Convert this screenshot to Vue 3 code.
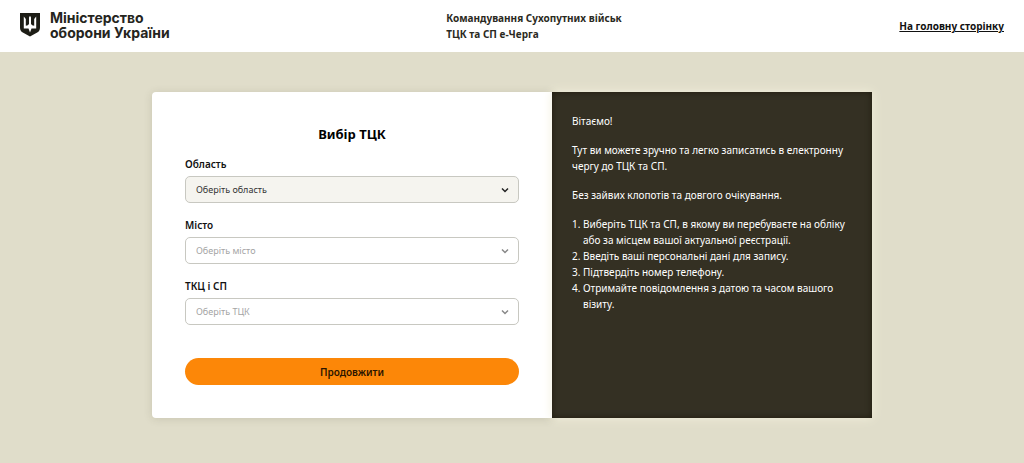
<template>
  <div class="page">
    <header class="header">
      <div class="logo">
        <svg class="logo-icon" viewBox="0 0 20 24" aria-hidden="true">
          <path d="M0 0h20v14.500q0 3.500-2.800 5L10 23.500 2.800 19.500Q0 18 0 14.500z" fill="#1d1d16" />
          <path d="M3.800 3.500L5.800 6v6.800q2.400 0 3.200-1.800V4.500l1-1.800 1 1.800V11q.8 1.800 3.200 1.800V6l2-2.500V15.500h-4.700L10 19.500 8.500 15.500H3.800z" fill="#fff" />
        </svg>
        <span class="logo-text">Міністерство<br />оборони України</span>
      </div>
      <div class="header-title">Командування Сухопутних військ<br />ТЦК та СП е-Черга</div>
      <a class="home-link" href="#">На головну сторінку</a>
    </header>

    <main class="main">
      <div class="card">
        <form class="form" @submit.prevent>
          <h1>Вибір ТЦК</h1>
          <div v-for="field in fields" :key="field.id" class="field">
            <label :for="field.id">{{ field.label }}</label>
            <div class="select-box">
              <select :id="field.id" v-model="field.value" :disabled="field.disabled">
                <option value="">{{ field.placeholder }}</option>
              </select>
              <svg class="chevron" viewBox="0 0 8 6" aria-hidden="true">
                <path d="M1 1.500l3 3 3-3" fill="none" stroke="currentColor" stroke-width="1.500" />
              </svg>
            </div>
          </div>
          <button type="submit" class="submit">Продовжити</button>
        </form>

        <section class="info">
          <p>Вітаємо!</p>
          <p>Тут ви можете зручно та легко записатись в електронну чергу до ТЦК та СП.</p>
          <p>Без зайвих клопотів та довгого очікування.</p>
          <ol>
            <li v-for="step in steps" :key="step">{{ step }}</li>
          </ol>
        </section>
      </div>
    </main>
  </div>
</template>

<script setup>
import { ref } from 'vue';

const fields = ref([
  { id: 'region', label: 'Область', placeholder: 'Оберіть область', value: '', disabled: false },
  { id: 'city', label: 'Місто', placeholder: 'Оберіть місто', value: '', disabled: true },
  { id: 'center', label: 'ТКЦ і СП', placeholder: 'Оберіть ТЦК', value: '', disabled: true }
]);

const steps = [
  'Виберіть ТЦК та СП, в якому ви перебуваєте на обліку або за місцем вашої актуальної реєстрації.',
  'Введіть ваші персональні дані для запису.',
  'Підтвердіть номер телефону.',
  'Отримайте повідомлення з датою та часом вашого візиту.'
];
</script>

<style>
body {
  background: #e0ddca;
}
</style>

<style scoped>
.page {
  font-family: "Noto Sans", "Open Sans", sans-serif;
  font-size: 10px;
  line-height: 16px;
  color: #111;
}

.header {
  display: grid;
  grid-template-columns: 1fr auto 1fr;
  align-items: center;
  min-height: 52px;
  padding: 0 20px;
  background: #fff;
}

.logo {
  display: flex;
  align-items: center;
  gap: 10px;
  padding-bottom: 3px;
}

.logo-icon {
  width: 20px;
  height: 24px;
}

.logo-text {
  font-family: Inter, sans-serif;
  font-size: 14px;
  font-weight: 700;
  line-height: 15px;
  color: #25251d;
}

.header-title {
  margin-left: 44px;
  font-weight: 700;
  color: #2b2a22;
}

.home-link {
  justify-self: end;
  font-weight: 700;
  color: #111;
}

.main {
  padding: 40px 20px;
}

.card {
  display: grid;
  grid-template-columns: 5fr 4fr;
  max-width: 720px;
  margin: 0 auto;
}

.form {
  padding: 32px 33px 33px;
  background: #fff;
  border-radius: 4px 0 0 4px;
  box-shadow: 0 1px 8px rgba(70, 65, 40, 0.15);
}

h1 {
  margin: 0 0 12px;
  font-size: 13px;
  line-height: 20px;
  text-align: center;
  color: #000;
}

.field {
  margin-bottom: 14px;
}

.field label {
  display: block;
  margin-bottom: 4px;
  font-weight: 600;
}

.select-box {
  position: relative;
}

.select-box select {
  display: block;
  appearance: none;
  box-sizing: border-box;
  width: 100%;
  height: 27px;
  padding: 0 28px 0 10px;
  border: 1px solid #c8c8c1;
  border-radius: 5px;
  background: #f5f4ef;
  color: #333;
  font-family: inherit;
  font-size: 9px;
  opacity: 1;
}

.select-box select:disabled {
  background: #fff;
  color: #a4a4a4;
}

.chevron {
  position: absolute;
  top: 11px;
  right: 10px;
  width: 8px;
  height: 6px;
  color: #222;
  pointer-events: none;
}

select:disabled + .chevron {
  color: #888;
}

.submit {
  display: block;
  width: 100%;
  height: 27px;
  margin-top: 33px;
  padding: 0;
  border: 0;
  border-radius: 14px;
  background: #fc8708;
  color: #2b1500;
  font-family: inherit;
  font-size: 10px;
  font-weight: 600;
}

.info {
  display: flex;
  flex-direction: column;
  gap: 13px;
  padding: 21px 20px;
  background: #343023;
  color: #fff;
  box-shadow: 0 0 10px #f3f0dc, inset 0 0 6px #1f1b0e;
}

.info p {
  margin: 0;
}

.info ol {
  margin: 0;
  padding-left: 11px;
}
</style>
